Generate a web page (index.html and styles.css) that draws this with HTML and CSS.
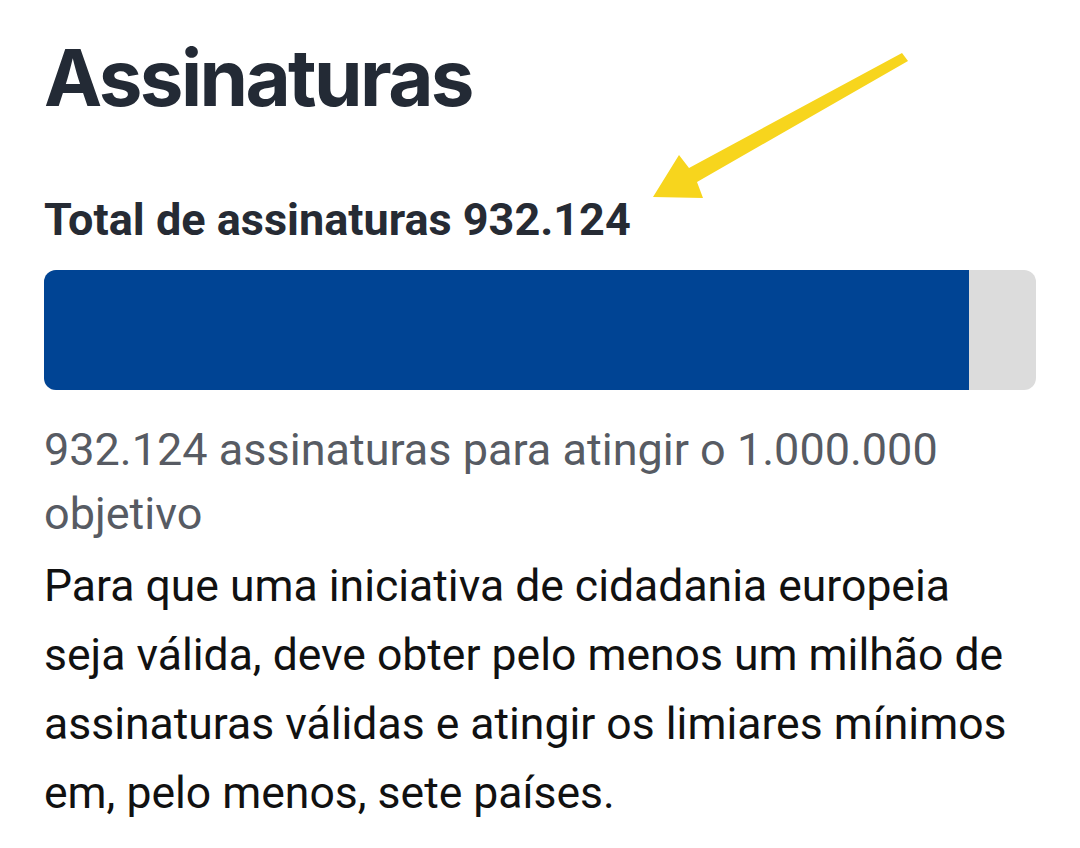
FILE: index.html
```html
<!DOCTYPE html>
<html lang="pt">
<head>
<meta charset="utf-8">
<title>Assinaturas</title>
<link rel="stylesheet" href="styles.css">
</head>
<body>
<main class="page">
  <h1 class="title">Assinaturas</h1>
  <h2 class="total">Total de assinaturas 932.124</h2>
  <div class="bar"><div class="bar-fill" style="width: 93.2124%"></div></div>
  <p class="goal">932.124 assinaturas para atingir o 1.000.000 objetivo</p>
  <p class="info">Para que uma iniciativa de cidadania europeia seja válida, deve obter pelo menos um milhão de assinaturas válidas e atingir os limiares mínimos em, pelo menos, sete países.</p>
  <svg class="arrow" width="1080" height="848" viewBox="0 0 1080 848" aria-hidden="true">
    <polygon points="902,53 908,61 697,182 703,198 653,197 679,155 689,168" fill="#f7d51d"/>
  </svg>
</main>
</body>
</html>
```

FILE: styles.css
```css
html, body {
  margin: 0;
  padding: 0;
  background: #ffffff;
}
.page {
  position: relative;
  width: 1080px;
  height: 848px;
  box-sizing: border-box;
  padding: 28px 44px 0 44px;
  font-family: Roboto, "Noto Sans", sans-serif;
  overflow: hidden;
}
.title {
  margin: 0;
  font-family: Inter, Roboto, sans-serif;
  font-weight: 700;
  font-size: 78px;
  line-height: 100px;
  color: #232a35;
  letter-spacing: -2.6px;
}
.total {
  margin: 66px 0 0 0;
  font-weight: 700;
  font-size: 45px;
  line-height: 52px;
  color: #262b34;
}
.bar {
  margin-top: 24px;
  height: 120px;
  background: #dcdcdc;
  border-radius: 12px;
  overflow: hidden;
  display: flex;
}
.bar-fill {
  height: 100%;
  background: #004494;
}
.goal {
  margin: 28px 0 0 0;
  font-size: 45px;
  line-height: 64px;
  color: #575b63;
  width: 930px;
}
.info {
  margin: 6px 0 0 0;
  font-size: 44.5px;
  line-height: 69px;
  color: #111111;
  width: 980px;
}
.arrow {
  position: absolute;
  left: 0;
  top: 0;
  pointer-events: none;
}
```
